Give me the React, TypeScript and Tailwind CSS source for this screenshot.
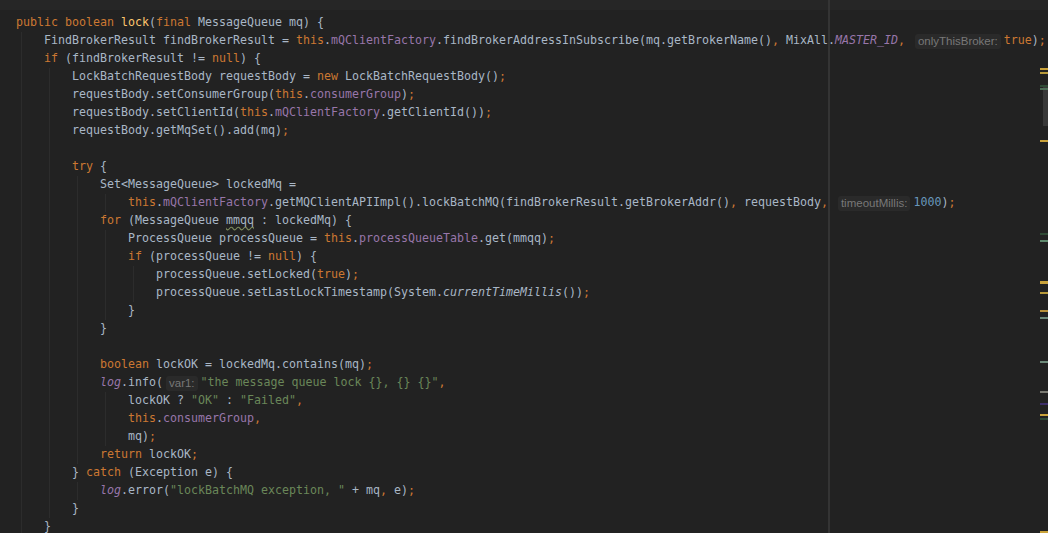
import React from "react";

type Tok = [string, string];

const C: Record<string, string> = {
  k: "text-[#cc7832]",
  t: "text-[#a9b7c6]",
  f: "text-[#9876aa]",
  fi: "text-[#9876aa] italic",
  s: "text-[#6a8759]",
  n: "text-[#6897bb]",
  m: "text-[#ffc66d]",
  i: "text-[#a9b7c6] italic",
  p: "text-[#cc7832]",
  u: "text-[#a9b7c6] underline decoration-wavy decoration-[#7c8a5c] underline-offset-2",
};

const lines: [number, Tok[]][] = [
  [0, [["k", "public "], ["k", "boolean "], ["m", "lock"], ["t", "("], ["k", "final "], ["t", "MessageQueue mq) {"]]],
  [1, [["t", "FindBrokerResult findBrokerResult = "], ["k", "this"], ["t", "."], ["f", "mQClientFactory"], ["t", ".findBrokerAddressInSubscribe(mq.getBrokerName()"], ["p", ","], ["t", " MixAll."], ["fi", "MASTER_ID"], ["p", ","], ["t", " "], ["h", "onlyThisBroker:"], ["k", "true"], ["t", ")"], ["p", ";"]]],
  [1, [["k", "if "], ["t", "(findBrokerResult != "], ["k", "null"], ["t", ") {"]]],
  [2, [["t", "LockBatchRequestBody requestBody = "], ["k", "new "], ["t", "LockBatchRequestBody()"], ["p", ";"]]],
  [2, [["t", "requestBody.setConsumerGroup("], ["k", "this"], ["t", "."], ["f", "consumerGroup"], ["t", ")"], ["p", ";"]]],
  [2, [["t", "requestBody.setClientId("], ["k", "this"], ["t", "."], ["f", "mQClientFactory"], ["t", ".getClientId())"], ["p", ";"]]],
  [2, [["t", "requestBody.getMqSet().add(mq)"], ["p", ";"]]],
  [2, []],
  [2, [["k", "try "], ["t", "{"]]],
  [3, [["t", "Set<MessageQueue> lockedMq ="]]],
  [4, [["k", "this"], ["t", "."], ["f", "mQClientFactory"], ["t", ".getMQClientAPIImpl().lockBatchMQ(findBrokerResult.getBrokerAddr()"], ["p", ","], ["t", " requestBody"], ["p", ","], ["t", " "], ["h", "timeoutMillis:"], ["n", "1000"], ["t", ")"], ["p", ";"]]],
  [3, [["k", "for "], ["t", "(MessageQueue "], ["u", "mmqq"], ["t", " : lockedMq) {"]]],
  [4, [["t", "ProcessQueue processQueue = "], ["k", "this"], ["t", "."], ["f", "processQueueTable"], ["t", ".get(mmqq)"], ["p", ";"]]],
  [4, [["k", "if "], ["t", "(processQueue != "], ["k", "null"], ["t", ") {"]]],
  [5, [["t", "processQueue.setLocked("], ["k", "true"], ["t", ")"], ["p", ";"]]],
  [5, [["t", "processQueue.setLastLockTimestamp(System."], ["i", "currentTimeMillis"], ["t", "())"], ["p", ";"]]],
  [4, [["t", "}"]]],
  [3, [["t", "}"]]],
  [3, []],
  [3, [["k", "boolean "], ["t", "lockOK = lockedMq.contains(mq)"], ["p", ";"]]],
  [3, [["fi", "log"], ["t", ".info("], ["h", "var1:"], ["s", "\"the message queue lock {}, {} {}\""], ["p", ","]]],
  [4, [["t", "lockOK ? "], ["s", "\"OK\""], ["t", " : "], ["s", "\"Failed\""], ["p", ","]]],
  [4, [["k", "this"], ["t", "."], ["f", "consumerGroup"], ["p", ","]]],
  [4, [["t", "mq)"], ["p", ";"]]],
  [3, [["k", "return "], ["t", "lockOK"], ["p", ";"]]],
  [2, [["t", "} "], ["k", "catch "], ["t", "(Exception e) {"]]],
  [3, [["fi", "log"], ["t", ".error("], ["s", "\"lockBatchMQ exception, \""], ["t", " + mq"], ["p", ","], ["t", " e)"], ["p", ";"]]],
  [2, [["t", "}"]]],
  [1, [["t", "}"]]],
];

const markers: [number, string, number][] = [
  [68, "#c9a23a", 2],
  [72, "#b89a3a", 2],
  [85, "#2f4a35", 2],
  [88, "#4d6e57", 2],
  [140, "#c9a23a", 2],
  [233, "#2f4a35", 2],
  [240, "#5f8a6e", 2],
  [281, "#c9a23a", 3],
  [292, "#b89a3a", 2],
  [310, "#b8903a", 2],
  [317, "#6d8a7a", 2],
  [361, "#6d8a7a", 2],
  [391, "#7a7a72", 2],
  [403, "#3d2f6a", 2],
  [414, "#c9a23a", 2],
  [418, "#2f4a35", 2],
  [531, "#c9a23a", 2],
];

function Hint({ text }: { text: string }) {
  return (
    <span className="inline-block mx-[3px] px-[3px] rounded-[3px] bg-[#2a2a2a] text-[#787878] text-[11.5px] leading-[15px] font-['Liberation_Sans',sans-serif] not-italic">
      {text}
    </span>
  );
}

export default function App() {
  return (
    <div className="relative w-[1048px] h-[533px] overflow-hidden bg-[#222222] font-['DejaVu_Sans_Mono',monospace] text-[11.63px]">
      <div className="h-[10px] bg-[#262626]" />
      <div className="flex flex-col pl-[16px] pt-[4px]">
        {lines.map(([ind, toks], li) => (
          <div key={li} className="flex items-center h-[18px] whitespace-pre">
            {Array.from({ length: ind }).map((_, g) => (
              <span key={g} className="inline-flex h-[18px] w-[28px] shrink-0">
                <span className="ml-[5px] w-px h-full bg-[#2c2c2c]" />
              </span>
            ))}
            {toks.map(([k, s], ti) =>
              k === "h" ? (
                <Hint key={ti} text={s} />
              ) : (
                <span key={ti} className={C[k]}>
                  {s}
                </span>
              )
            )}
          </div>
        ))}
      </div>
      {/* right margin guide */}
      <div className="absolute top-0 bottom-0 left-[828px] w-[2px] bg-[#343434]" />
      {/* scrollbar thumb */}
      <div className="absolute left-[1043px] top-[87px] w-[5px] h-[39px] bg-[#383838]" />
      {markers.map(([y, c, h], i) => (
        <div
          key={i}
          className="absolute left-[1040px] w-[8px]"
          style={{ top: y, height: h, backgroundColor: c }}
        />
      ))}
    </div>
  );
}
